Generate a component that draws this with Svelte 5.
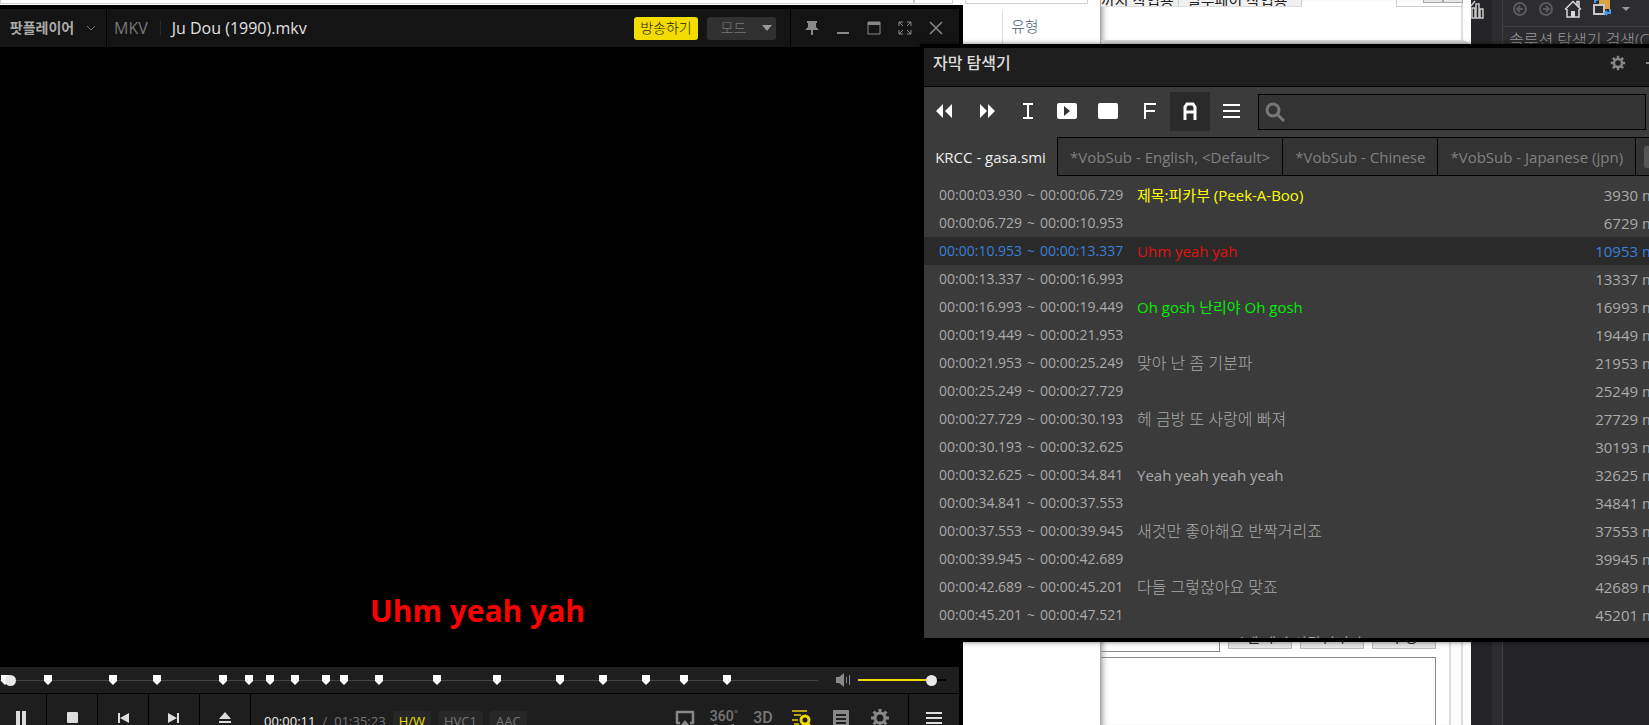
<script>
  const cues = [
    { from: '00:00:03.930', to: '00:00:06.729', text: '제목:피카부 (Peek-A-Boo)', start: 3930, tone: 'yellow' },
    { from: '00:00:06.729', to: '00:00:10.953', text: '', start: 6729 },
    { from: '00:00:10.953', to: '00:00:13.337', text: 'Uhm yeah yah', start: 10953, tone: 'red', current: true },
    { from: '00:00:13.337', to: '00:00:16.993', text: '', start: 13337 },
    { from: '00:00:16.993', to: '00:00:19.449', text: 'Oh gosh 난리야 Oh gosh', start: 16993, tone: 'green' },
    { from: '00:00:19.449', to: '00:00:21.953', text: '', start: 19449 },
    { from: '00:00:21.953', to: '00:00:25.249', text: '맞아 난 좀 기분파', start: 21953, tone: 'korean' },
    { from: '00:00:25.249', to: '00:00:27.729', text: '', start: 25249 },
    { from: '00:00:27.729', to: '00:00:30.193', text: '헤 금방 또 사랑에 빠져', start: 27729, tone: 'korean' },
    { from: '00:00:30.193', to: '00:00:32.625', text: '', start: 30193 },
    { from: '00:00:32.625', to: '00:00:34.841', text: 'Yeah yeah yeah yeah', start: 32625 },
    { from: '00:00:34.841', to: '00:00:37.553', text: '', start: 34841 },
    { from: '00:00:37.553', to: '00:00:39.945', text: '새것만 좋아해요 반짝거리죠', start: 37553, tone: 'korean' },
    { from: '00:00:39.945', to: '00:00:42.689', text: '', start: 39945 },
    { from: '00:00:42.689', to: '00:00:45.201', text: '다들 그렇잖아요 맞죠', start: 42689, tone: 'korean' },
    { from: '00:00:45.201', to: '00:00:47.521', text: '', start: 45201 }
  ];
  const tabs = ['*VobSub - English, <Default>', '*VobSub - Chinese', '*VobSub - Japanese (jpn)'];
  const bookmarks = [5, 48, 113, 157, 223, 249, 270, 295, 326, 344, 379, 437, 497, 560, 603, 646, 684, 727];
  const trackLength = 818;
  let query = $state('');
  let position = $state(0);
  let volume = $state(88);
</script>

{#snippet gear()}
  <g fill="none" stroke="currentColor">
    <circle cx="10" cy="10" r="5" stroke-width="3" />
    <path stroke-width="3" d="M10 1v4M10 15v4M1 10h4M15 10h4M3.6 3.6l2.8 2.8M13.6 13.6l2.8 2.8M3.6 16.4l2.8-2.8M13.6 6.4l2.8-2.8" />
  </g>
{/snippet}

<main class="desktop">
  <section class="files">
    <div class="addressbar"><span class="address"></span><span class="refresh"></span><span class="find"></span></div>
    <div class="columns"><span class="column">유형</span></div>
  </section>

  <section class="form">
    <div class="formtop">
      <div class="formtabs"><span>까지 작업용</span><span>필수페이 작업용</span></div>
      <div class="spin"><i></i><i></i></div>
    </div>
    <div class="formbottom">
      <div class="formrow"><span class="field"></span><button>열기</button><button>추가</button><button>수정</button></div>
      <div class="textarea"></div>
    </div>
  </section>

  <section class="studio">
    <div class="rail">
      <svg width="14" height="20" viewBox="0 0 14 20"><path d="M1 18V8h3v10zM5 18V4h3v14zM9 18V9h3v9zM0 6l4-5" fill="none" stroke="#c8c8c8" stroke-width="1.5" /></svg>
    </div>
    <div class="solution">
      <div class="studiobar">
        <svg width="16" height="18" viewBox="0 0 16 18"><circle cx="8" cy="9" r="6" fill="none" stroke="#5a5a5e" stroke-width="2" /><path d="M11 9H5m3-3L5 9l3 3" fill="none" stroke="#5a5a5e" stroke-width="2" /></svg>
        <svg width="16" height="18" viewBox="0 0 16 18"><circle cx="8" cy="9" r="6" fill="none" stroke="#5a5a5e" stroke-width="2" /><path d="M5 9h6M8 6l3 3-3 3" fill="none" stroke="#5a5a5e" stroke-width="2" /></svg>
        <svg width="18" height="18" viewBox="0 0 18 18"><path d="M1 9.500l8-8 8 8M3 9v8h12V9M13 5V1.500h2V7" fill="none" stroke="#d8d8d8" stroke-width="1.500" /><path d="M7 17v-6h4v6z" fill="#d8d8d8" /></svg>
        <svg width="20" height="18" viewBox="0 0 20 18"><path d="M7 0h11v9H7z" fill="#d9a441" /><path d="M2 5h10v9H2z" fill="#2d2d30" stroke="#c8c8c8" stroke-width="2" /><path d="M13 13h5V9M15 11l-2 2 2 2M3 3V0h3" fill="none" stroke="#459be8" stroke-width="2" /></svg>
        <svg width="8" height="18" viewBox="0 0 8 18"><path d="M0 7h8l-4 4z" fill="#999" /></svg>
      </div>
      <div class="studiosearch">솔루션 탐색기 검색(Ctrl+;)</div>
    </div>
  </section>

  <section class="player">
    <header>
      <button class="brand">팟플레이어
        <svg width="10" height="6" viewBox="0 0 10 6"><path d="M1 1l4 4 4-4" fill="none" stroke="#777" /></svg>
      </button>
      <span class="format">MKV</span>
      <h1>Ju Dou (1990).mkv</h1>
      <button class="live">방송하기</button>
      <button class="mode"><span>모드</span><svg width="10" height="6" viewBox="0 0 10 6"><path d="M0 0h10L5 6z" fill="#999" /></svg></button>
      <nav class="winbuttons">
        <button aria-label="항상 위"><svg width="14" height="14" viewBox="0 0 14 14"><path d="M2 0h10v2h-1v4l3 3H0l3-3V2H2zM6 9h2v5H6z" fill="#888" /></svg></button>
        <button aria-label="최소화"><svg width="14" height="14" viewBox="0 0 14 14"><path d="M1 11h12v2H1z" fill="#888" /></svg></button>
        <button aria-label="최대화"><svg width="14" height="14" viewBox="0 0 14 14"><path d="M1 1h12v12H1z" fill="none" stroke="#888" /><path d="M1 1h12v3H1z" fill="#888" /></svg></button>
        <button aria-label="전체 화면"><svg width="14" height="14" viewBox="0 0 14 14"><path d="M1 5V1h4M9 1h4v4M13 9v4H9M5 13H1V9M1 1l4 4M13 1L9 5M13 13L9 9M1 13l4-4" fill="none" stroke="#888" /></svg></button>
        <button aria-label="닫기"><svg width="14" height="14" viewBox="0 0 14 14"><path d="M1 1l12 12M13 1L1 13" fill="none" stroke="#888" stroke-width="1.500" /></svg></button>
      </nav>
    </header>

    <div class="video"><p>Uhm yeah yah</p></div>

    <div class="seekbar">
      <div class="track">
        {#each bookmarks as x}
          <svg class="bookmark" style:left="{(x / trackLength) * 100}%" width="8" height="10" viewBox="0 0 8 10"><path d="M0 0h8v6L4 10 0 6z" fill="#fff" /></svg>
        {/each}
        <input class="seek" type="range" aria-label="재생 위치" min="0" max="5723" bind:value={position} />
      </div>
      <button class="mute" aria-label="음소거"><svg width="16" height="14" viewBox="0 0 16 14"><path d="M0 4h3l5-4v14l-5-4H0z" fill="#888" /><path d="M10.500 4v6M13.500 2v10" stroke="#888" /></svg></button>
      <input class="volume" type="range" aria-label="음량" min="0" max="100" bind:value={volume} style:--level="{volume}%" />
    </div>

    <footer>
      <div class="transport">
        <button aria-label="일시 정지"><svg width="16" height="14" viewBox="0 0 16 14"><path d="M3 0h4v14H3zM9 0h4v14H9z" fill="#ddd" /></svg></button>
        <button aria-label="정지"><svg width="12" height="12" viewBox="0 0 12 12"><rect width="11" height="11" x="1" rx="1" fill="#ddd" /></svg></button>
        <button aria-label="이전"><svg width="12" height="12" viewBox="0 0 12 12"><path d="M1 1h2v10H1zM12 1v10L3 6z" fill="#ddd" /></svg></button>
        <button aria-label="다음"><svg width="12" height="12" viewBox="0 0 12 12"><path d="M9 1h2v10H9zM0 1v10l9-5z" fill="#ddd" /></svg></button>
        <button aria-label="열기"><svg width="12" height="12" viewBox="0 0 12 12"><path d="M6 0l6 7H0zM0 9h12v2H0z" fill="#ddd" /></svg></button>
      </div>
      <div class="times"><time>00:00:11</time><span>/</span><time class="total">01:35:23</time></div>
      <div class="codecs"><span class="hw">H/W</span><span>HVC1</span><span>AAC</span></div>
      <div class="extras">
        <button aria-label="출력"><svg width="20" height="20" viewBox="0 0 20 20"><path d="M5 15H2V4h16v11h-3" fill="none" stroke="#888" stroke-width="2.500" stroke-linejoin="round" /><path d="M10 12l5 6H5z" fill="#888" /></svg></button>
        <button class="word vr"><span>360˚</span><svg width="20" height="5" viewBox="0 0 20 5"><path d="M0 0q10 6 20 0" fill="none" stroke="#777" stroke-width="1.500" /></svg></button>
        <button class="word">3D</button>
        <button aria-label="자막 탐색기"><svg width="20" height="20" viewBox="0 0 20 20"><path d="M0 3h15M2 7h7M0 12h6M2 16h5" stroke="#e6d000" stroke-width="1.500" /><circle cx="13" cy="12" r="4" fill="none" stroke="#f0d800" stroke-width="3" /><path d="M15 15l4 4" stroke="#f0d800" stroke-width="3" /></svg></button>
        <button aria-label="재생 목록"><svg width="20" height="20" viewBox="0 0 20 20"><rect x="2" y="2" width="16" height="17" rx="1" fill="#888" /><path d="M5 7h10M5 11h10M5 15h10" stroke="#1e1e1e" stroke-width="2" /></svg></button>
        <button aria-label="환경 설정"><svg width="20" height="20" viewBox="0 0 20 20" color="#888">{@render gear()}</svg></button>
      </div>
      <button class="menu" aria-label="메뉴"><svg width="16" height="12" viewBox="0 0 16 12"><path d="M0 1h16M0 6h16M0 11h16" stroke="#ddd" stroke-width="2" /></svg></button>
    </footer>
  </section>

  <section class="subtitles">
    <header>
      <h2>자막 탐색기</h2>
      <button aria-label="설정"><svg width="16" height="16" viewBox="0 0 20 20" color="#888">{@render gear()}</svg></button>
      <button aria-label="고정"><svg width="16" height="16" viewBox="0 0 16 16"><path d="M0 8h6M6 3v10l5-5z" fill="#888" stroke="#888" stroke-width="2" /></svg></button>
    </header>
    <div class="tools">
      <button aria-label="뒤로"><svg width="20" height="18" viewBox="0 0 20 18"><path d="M9 2v14L2 9zM18 2v14l-7-7z" fill="#fff" /></svg></button>
      <button aria-label="앞으로"><svg width="20" height="18" viewBox="0 0 20 18"><path d="M5 2v14l7-7zM13 2v14l7-7z" fill="#fff" /></svg></button>
      <button aria-label="싱크"><svg width="20" height="18" viewBox="0 0 20 18"><path d="M7 2h10M12 2v14M7 16h10" stroke="#fff" stroke-width="2" /></svg></button>
      <button aria-label="재생"><svg width="20" height="18" viewBox="0 0 20 18"><rect y="1" width="20" height="16" rx="2" fill="#fff" /><path d="M7 4l6 5-6 5z" fill="#333" /></svg></button>
      <button aria-label="화면"><svg width="20" height="18" viewBox="0 0 20 18"><rect y="1" width="20" height="16" rx="2" fill="#fff" /></svg></button>
      <button aria-label="글꼴"><svg width="20" height="18" viewBox="0 0 20 18"><path d="M6 17V2h11M6 9h10" fill="none" stroke="#fff" stroke-width="2" /></svg></button>
      <button class="on" aria-label="자동"><svg width="20" height="18" viewBox="0 0 20 18"><path d="M5 18V5l2-3h6l2 3v13M5 10h10" fill="none" stroke="#fff" stroke-width="3" /></svg></button>
      <button aria-label="목록"><svg width="20" height="18" viewBox="0 0 20 18"><path d="M2 3h17M2 9h17M2 15h17" stroke="#fff" stroke-width="2" /></svg></button>
      <label class="search">
        <svg width="20" height="20" viewBox="0 0 20 20"><circle cx="8" cy="8" r="6" fill="none" stroke="#777" stroke-width="3" /><path d="M12 12l7 7" stroke="#777" stroke-width="3" /></svg>
        <input type="search" aria-label="자막 검색" bind:value={query} />
      </label>
    </div>
    <div class="tabs">
      <button class="active">KRCC - gasa.smi</button>
      {#each tabs as tab}<button>{tab}</button>{/each}
      <button class="more" aria-label="이전 탭"><i></i></button>
    </div>
    <div class="list">
      <table>
        <tbody>
          {#each cues as cue}
            <tr class:current={cue.current}>
              <td class="range">{cue.from}<span>~</span>{cue.to}</td>
              <td class="text {cue.tone ?? ''}">{cue.text}</td>
              <td class="start">{cue.start} ms</td>
            </tr>
          {/each}
          <tr><td class="range"></td><td class="text">me i am now 시계 때마 사랑이니다</td><td></td></tr>
        </tbody>
      </table>
    </div>
  </section>
</main>

<style>
  :global(body) { margin: 0; background: #fff; }
  * { box-sizing: border-box; }
  .desktop {
    position: relative;
    display: flex;
    height: 100vh;
    overflow: hidden;
    font: 15px/20px "Open Sans", "Noto Sans CJK KR", sans-serif;
  }
  button { padding: 0; border: 0; background: none; color: inherit; font: inherit; display: flex; align-items: center; justify-content: center; }
  svg { display: block; flex: none; }
  h1, h2, p { margin: 0; font-weight: 400; }

  .files { flex: 1; background: #fff; display: flex; flex-direction: column; }
  .addressbar { display: flex; height: 4px; }
  .addressbar span { border: 1px solid #d0d0d0; border-top: 0; }
  .address { flex: 1; }
  .refresh { width: 39px; }
  .find { width: 123px; margin: 0 12px; }
  .columns { display: flex; justify-content: flex-end; padding-top: 7px; }
  .column { width: 98px; height: 36px; padding: 5px 8px; border-left: 1px solid #ddd; color: #4c607a; font-weight: 300; }

  .form { width: 371px; background: #fff; border-left: 1px solid #aaa; box-shadow: inset 6px 0 6px -5px #888; display: flex; flex-direction: column; justify-content: space-between; }
  .formtop { display: flex; justify-content: space-between; height: 44px; padding-right: 8px; border-right: 8px solid #fff; border-bottom: 4px solid #ddd; }
  .formtop { padding-right: 0; background: linear-gradient(#ddd, #ddd) right / 2px 100% no-repeat; }
  .formtabs { display: flex; height: 7px; overflow: hidden; background: #f0f0f0; border-bottom: 1px solid #ddd; color: #222; }
  .formtabs span { width: 123px; padding-left: 8px; border-right: 1px solid #ccc; line-height: 0; white-space: nowrap; }
  .formtabs span:first-child { width: 78px; padding-left: 0; }
  .spin { display: flex; justify-content: flex-end; width: 67px; height: 7px; border: 1px solid #ccc; border-width: 0 0 1px 1px; }
  .spin i { width: 20px; height: 3px; border: 1px solid #aaa; border-top: 0; background: #e6e6e6; }
  .formbottom { height: 118px; display: flex; flex-direction: column; padding-right: 35px; position: relative; }
  .formbottom::after { content: ""; position: absolute; inset: 0 8px 0 auto; width: 10px; border: solid #ddd; border-width: 0 2px; background: #fcfcfc; }
  .formrow { display: flex; gap: 8px; height: 45px; }
  .formrow .field { flex: 1; border: solid #888; border-width: 0 1px 1px 0; }
  .formrow button { width: 64px; height: 42px; padding-bottom: 2px; border: 1px solid #bbb; background: #e6e6e6; color: #222; align-items: flex-end; }
  .textarea { flex: 1; margin-top: 5px; border: solid #888; border-width: 1px 1px 0 0; }

  .studio { width: 178px; background: #252528; display: flex; color: #999; }
  .rail { flex: none; width: 31px; border-right: 10px solid #2d2d30; }
  .solution { flex: 1; min-width: 0; border-left: 1px solid #3f3f46; }
  .studiobar { display: flex; gap: 10px; height: 26px; padding-left: 9px; background: #2d2d30; }
  .studiosearch { height: 30px; padding: 3px 6px; border-top: 1px solid #3f3f46; background: #2d2d30; font-size: 16px; font-weight: 300; white-space: nowrap; overflow: hidden; }

  .player {
    position: absolute;
    inset: 5px 686px -21px 0;
    border: 4px solid #000;
    border-left: 0;
    background: #1e1e1e;
    display: flex;
    flex-direction: column;
  }
  .player header { display: flex; align-items: center; height: 38px; background: #141414; }
  .brand { align-self: stretch; width: 107px; border-right: 1px solid #000; color: #aaa; font-size: 14px; font-weight: 700; gap: 12px; }
  .format { margin-left: 7px; padding-right: 12px; border-right: 1px solid #2a2a2a; color: #777; font-size: 16px; line-height: 14px; }
  h1 { flex: 1; padding-left: 11px; color: #e0e0e0; font-size: 16px; }
  .live { width: 64px; height: 23px; border-radius: 3px; background: #f5dc00; color: #221f00; font-size: 14px; }
  .mode { width: 69px; height: 23px; margin: 0 14px 0 9px; border-radius: 3px; background: #303030; color: #777; gap: 16px; font-size: 14px; }
  .live, .mode { font-weight: 300; }
  .mode span { padding-left: 10px; }
  .winbuttons { display: flex; align-self: stretch; gap: 3px; padding: 0 9px 0 7px; border-left: 1px solid #000; }
  .winbuttons button { width: 28px; }
  .video { flex: 1; display: flex; align-items: flex-end; justify-content: center; padding: 0 4px 34px 0; background: #000; }
  .video p { color: #f00; font-size: 30px; line-height: 44px; font-weight: 700; }

  .seekbar { display: flex; align-items: center; height: 27px; padding-right: 13px; border-bottom: 1px solid #000; }
  .track { position: relative; flex: 1; height: 18px; }
  .track::before { content: ""; position: absolute; inset: 9px 0 auto 0; border-top: 1px solid #444; }
  .bookmark { position: absolute; top: 4px; margin-left: -4px; }
  input[type='range'] { appearance: none; margin: 0; background: none; }
  input[type='range']::-webkit-slider-thumb { appearance: none; width: 11px; height: 11px; border-radius: 50%; background: #e8e8e8; }
  .seek { position: absolute; inset: 0 0 0 5px; height: 18px; }
  .mute { width: 40px; padding-left: 12px; }
  .volume { width: 88px; height: 18px; }
  .volume::-webkit-slider-runnable-track { height: 2px; background: linear-gradient(90deg, #f0d800 var(--level), #000 var(--level)); }
  .volume::-webkit-slider-thumb { margin-top: -4px; }

  footer { display: flex; align-items: center; height: 48px; color: #888; }
  .transport { display: flex; align-self: stretch; }
  .transport button { width: 51px; border-right: 1px solid #000; }
  .transport button:first-child { width: 47px; padding-right: 4px; }
  .times { display: flex; gap: 7px; padding: 5px 0 0 13px; font-size: 13px; color: #777; }
  .times time:first-child { color: #eee; }
  .codecs { display: flex; gap: 7px; padding: 5px 0 0 7px; font-size: 13px; }
  .codecs span { padding: 0 6px; border-radius: 2px; background: #272727; color: #777; }
  .codecs .hw { color: #f0e000; }
  .extras { display: flex; flex: 1; justify-content: flex-end; gap: 19px; padding-right: 18px; }
  .extras button { width: 20px; }
  .word { font: 500 16px/16px Roboto, sans-serif; color: #777; }
  .vr { flex-direction: column; font-size: 14px; }
  .menu { align-self: stretch; width: 51px; border-left: 1px solid #000; }

  .subtitles {
    position: absolute;
    inset: 44px -40px 83px calc(100vw - 729px);
    display: flex;
    flex-direction: column;
    border: 4px solid #000;
    background: #3b3b3b;
    box-shadow: 0 0 5px #0008;
    color: #aaa;
  }
  .subtitles header { display: flex; gap: 20px; height: 39px; padding: 0 23px 8px 9px; border-bottom: 1px solid #000; background: #1e1e1e; align-items: center; }
  h2 { flex: 1; color: #ddd; font-size: 16px; font-weight: 500; }
  .tools { display: flex; gap: 1px; padding: 5px 39px 6px 0; }
  .tools button { width: 40px; height: 39px; padding-bottom: 1px; }
  .tools .on { background: #2a2a2a; }
  .search { flex: 1; display: flex; align-items: center; height: 36px; margin: 2px 0 0 6px; padding-left: 6px; border: 1px solid #000; background: #333; }
  .search input { flex: 1; min-width: 0; border: 0; outline: 0; background: none; color: #ddd; font: inherit; }
  .tabs { display: flex; height: 39px; white-space: nowrap; }
  .tabs button { padding: 0 12px; border: 1px solid #000; border-left: 0; background: #333; color: #808080; }
  .tabs .active { width: 134px; padding: 0; border-width: 0 1px 0 0; background: none; color: #eee; }
  .tabs .more { flex: 1; justify-content: flex-start; padding: 0 8px; }
  .more i { width: 24px; height: 22px; border-radius: 3px; background: #555; }
  .list { flex: 1; overflow: hidden; padding-top: 5px; }
  table { width: 100%; border-collapse: collapse; }
  td { height: 28px; padding: 0; white-space: nowrap; }
  .range { width: 213px; padding-left: 15px; font-size: 14px; }
  .range span { padding: 0 5px; }
  .start { padding-right: 22px; text-align: right; }
  .korean { font-size: 16px; font-weight: 300; }
  .current { background: #2a2a2a; color: #3b7fd9; }
  .yellow { color: #ff0; }
  .red { color: #e01010; }
  .green { color: #0e0; }
</style>
